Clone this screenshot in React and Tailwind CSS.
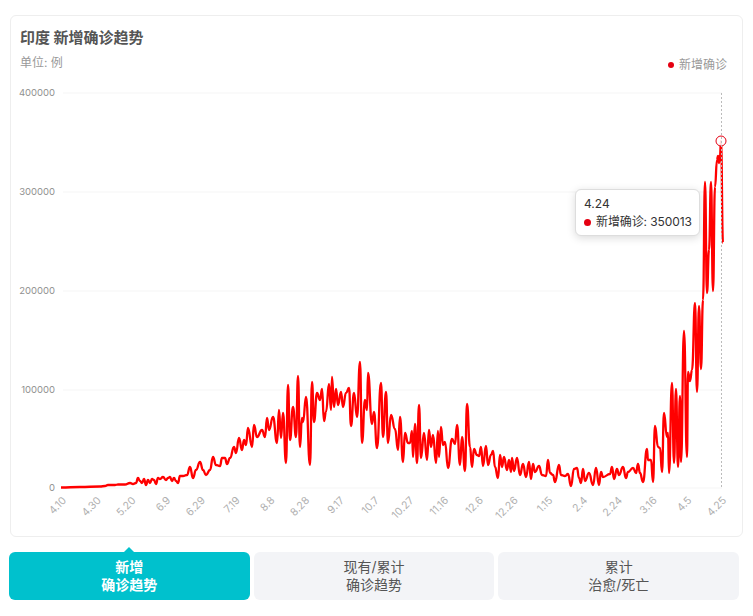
import React from 'react';

// data traced in page pixels, the svg viewBox below uses the same coordinates
const points = [
  [61,487.5],[80,487],[100,486.5],[105,486],[108,485],[115,485],[118,484.5],[125,484.5],[130,483],[133,484],[136,483],[138,478],[140,481],[142,483],[144,479],[146,485],[148,480],[150,483],[152,479],[154,480],[156,484],[158,478],[160,479],[163,477],[166,480],[168,478],[170,477],[172,481],[174,478],[176,481],[178,483],[180,476],[183,476],[187,475],[190,467],[193,478],[196,470],[200,462],[203,470],[206,475],[210,470],[213,457],[216,465],[220,466],[222,458],[225,458],[227,464],[230,458],[234,447],[236,453],[239,438],[242,450],[244,440],[246,445],[248,428],[252,447],[254,425],[257,437],[262,430],[265,437],[267,418],[269,430],[273,417],[277,443],[279,410],[281,438],[283,413],[286,463],[288,385],[290,440],[293,407],[296,437],[298,376],[300,447],[302,418],[303,422],[306,397],[310,465],[312,382],[314,422],[317,393],[320,400],[322,389],[324,421],[326,412],[329,384],[331,410],[332,377],[334,407],[336,389],[338,405],[341,392],[343,407],[346,393],[349,388],[351,426],[354,393],[357,417],[360,362],[362,443],[365,400],[367,410],[368,373],[372,424],[374,412],[377,448],[381,383],[383,437],[386,392],[388,443],[391,415],[395,429],[398,450],[400,417],[403,462],[405,433],[408,443],[410,443],[412,431],[413,457],[415,424],[417,463],[419,405],[421,458],[424,433],[427,460],[429,430],[431,447],[433,435],[436,463],[438,431],[439,457],[441,427],[443,445],[445,442],[448,468],[452,439],[455,444],[457,425],[460,465],[462,437],[465,471],[467,404],[470,447],[472,467],[474,449],[477,455],[479,456],[481,447],[483,466],[486,446],[488,465],[491,455],[493,451],[495,467],[498,478],[500,455],[502,467],[504,457],[507,470],[509,460],[511,472],[512,458],[514,471],[517,458],[520,475],[523,464],[526,477],[529,462],[531,479],[533,464],[535,472],[539,466],[542,475],[546,476],[548,460],[550,473],[553,475],[555,482],[559,465],[561,475],[565,476],[568,474],[571,486],[574,469],[577,468],[579,478],[581,483],[583,469],[585,481],[589,473],[593,485],[596,468],[599,485],[601,472],[603,477],[610,474],[612,467],[614,479],[617,469],[619,475],[623,467],[626,478],[628,472],[633,468],[636,473],[638,464],[640,473],[643,482],[647,449],[648,460],[651,460],[653,482],[655,426],[658,447],[660,448],[662,472],[664,413],[667,437],[668,433],[669,473],[672,383],[674,463],[676,389],[678,467],[680,396],[681,462],[684,331],[687,457],[688,372],[690,381],[692,370],[695,303],[697,392],[699,306],[701,369],[703,300],[705,182],[707,293],[709,250],[711,182],[713,291],[715,187],[717,160],[718,156],[719,163],[720,155],[721,141],[723,243],
];

const linePath = points.reduce((d, [x, y], i) => {
  if (i === 0) return `M${x} ${y}`;
  const [px, py] = points[i - 1];
  const mx = (px + x) / 2;
  return `${d} C${mx} ${py} ${mx} ${y} ${x} ${y}`;
}, '');

const yTicks = [
  { label: '400000', y: 93 },
  { label: '300000', y: 192 },
  { label: '200000', y: 291 },
  { label: '100000', y: 390 },
  { label: '0', y: 488 },
];

const xLabels = ['4.10','4.30','5.20','6.9','6.29','7.19','8.8','8.28','9.17','10.7','10.27','11.16','12.6','12.26','1.15','2.4','2.24','3.16','4.5','4.25'];

const Tab = ({ top, bottom, active }) => (
  <div className={`relative flex-1 h-12 rounded-md flex flex-col items-center justify-center text-sm leading-[18px] ${active ? 'bg-[#00c1cd] text-white font-bold' : 'bg-[#f3f4f7] text-[#555]'}`}>
    {active && (
      <span className="absolute -top-[5px] left-1/2 -ml-[5px] w-0 h-0 border-x-[5px] border-x-transparent border-b-[5px] border-b-[#00c1cd]" />
    )}
    <span>{top}</span>
    <span>{bottom}</span>
  </div>
);

export default function App() {
  return (
    <div className="w-[753px] h-[616px] bg-white pt-[15px] font-['Inter','Noto_Sans_CJK_SC',sans-serif] overflow-hidden">
      {/* Chart card */}
      <div className="ml-[10px] w-[733px] h-[522px] border border-[#eeeeee] rounded-md">
        <div className="h-[67px] pl-[9px] pr-[15px] pt-[12px]">
          <h1 className="text-[15px] leading-5 font-bold text-[#555]">印度 新增确诊趋势</h1>
          <div className="flex justify-between mt-[5px]">
            <span className="text-xs leading-5 text-[#999]">单位: 例</span>
            <span className="flex items-center gap-[5px] text-xs leading-5 text-[#999] mt-[2px]">
              <span className="w-[6px] h-[6px] rounded-full bg-[#e50012]" />
              新增确诊
            </span>
          </div>
        </div>
        <div className="relative">
          <svg width="731" height="453" viewBox="11 83 731 453" className="block">
            {yTicks.map(t => (
              <g key={t.label}>
                <line x1="63" x2="722" y1={t.y} y2={t.y} stroke="#f5f5f5" />
                <text x="55" y={t.y + 2.5} textAnchor="end" fontSize="9.5" fill="#909090">{t.label}</text>
              </g>
            ))}
            {xLabels.map((label, i) => {
              const x = 61 + i * 34.74 + 6;
              return (
                <text key={label} x={x} y="501" textAnchor="end" fontSize="10.5" fill="#b0b0b0" transform={`rotate(-45 ${x} 501)`}>{label}</text>
              );
            })}
            <path d={linePath} fill="none" stroke="#ff0000" strokeWidth="2.3" strokeLinejoin="round" />
            <circle cx="721" cy="141" r="5" fill="#fff" fillOpacity="0.85" stroke="#e50012" />
            <line x1="721.5" x2="721.5" y1="93" y2="488" stroke="#bbb" strokeDasharray="2 2" />
          </svg>
          {/* Tooltip */}
          <div className="absolute left-[564px] top-[106px] w-[125px] h-[47px] bg-white border border-[#ddd] rounded-md shadow-[0_2px_8px_rgba(0,0,0,0.15)] px-2 pt-[6px] text-[#333] text-xs leading-[18px]">
            <div className="text-xs">4.24</div>
            <div className="flex items-center gap-[5px] mt-px">
              <span className="w-[7px] h-[7px] shrink-0 rounded-full bg-[#e50012]" />
              <span className="whitespace-nowrap tracking-[-0.1px]">新增确诊: 350013</span>
            </div>
          </div>
        </div>
      </div>

      {/* Tabs */}
      <div className="flex gap-1 ml-[9px] w-[730px] mt-[15px]">
        <Tab top="新增" bottom="确诊趋势" active />
        <Tab top="现有/累计" bottom="确诊趋势" />
        <Tab top="累计" bottom="治愈/死亡" />
      </div>
    </div>
  );
}
